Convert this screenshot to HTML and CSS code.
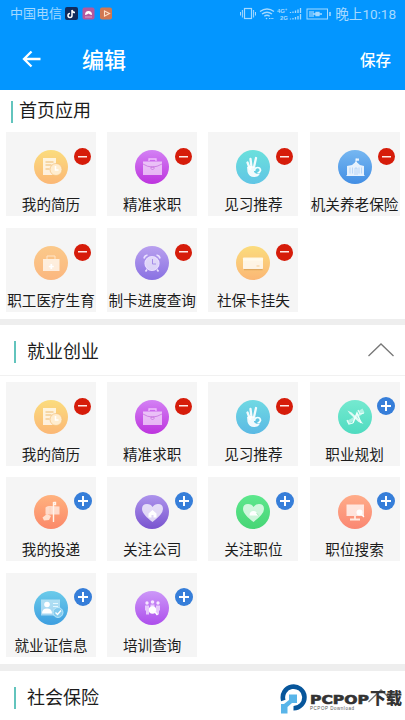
FILE: index.html
```html
<!DOCTYPE html>
<html lang="zh-CN">
<head>
<meta charset="utf-8">
<title>编辑</title>
<link rel="stylesheet" href="styles.css">
</head>
<body>
<svg class="defs" aria-hidden="true">
  <symbol id="resume" viewBox="0 0 34 34"><path d="M9 8h13v17H9z" fill="#fff" opacity=".75"/><path d="M11.500 12h8M11.500 15h6M11.500 19h4" stroke="#eebb70" stroke-width="1.2"/><circle cx="22" cy="19.500" r="6" fill="#ffedcf" stroke="#f3c27c" stroke-width=".7"/><path d="M21.500 16v4h3" fill="none" stroke="#fff" stroke-width="1.500"/></symbol>
  <symbol id="bag" viewBox="0 0 34 34"><path d="M14 11V9h7v2" fill="none" stroke="#efc1fb" stroke-width="1.300"/><path d="M8 11.500h19v13.500H8z" fill="#fff" opacity=".6"/><path d="M8 14q9 6 19 0M16 17h3v1.500L17.500 20 16 18.500z" fill="none" stroke="#c872de" stroke-width=".8"/></symbol>
  <symbol id="hand" viewBox="0 0 34 34"><g fill="none" stroke="#fff" stroke-width="2.300" stroke-linecap="round" opacity=".92"><path d="M14 19 11.500 12.500M15.500 17 14.500 9M18 17 20 8"/></g><path d="M11 17q3-1.500 6.500-.5l1 2.500q-1.500 2.500 .5 4 2.500 1.500 5 .5-1.500 3.500-6 3.500-5 0-6.500-5z" fill="#fff" opacity=".9"/><path d="M18.500 21q0-3.500 3-3.500t3 3q-.5 2-3 2.500" fill="none" stroke="#f2feff" stroke-width="1.700"/></symbol>
  <symbol id="building" viewBox="0 0 34 34"><path d="M18 13V8.500" stroke="#fff" stroke-width=".9"/><path d="M18 8.500h3v2.200h-3zM9 16l5-1 4-3.500 4 3.500 4 1v9.500H9z" fill="#fff" opacity=".85"/><path d="M12 17.500v6M14.500 17.500v6M21 17.500v6M23.500 17.500v6M17 25v-7h2v7" stroke="#a8ccf6" stroke-width=".7" fill="none"/><path d="M8.500 25.500h18" stroke="#e7f3ff"/></symbol>
  <symbol id="medkit" viewBox="0 0 34 34"><path d="M13 13v-3h8v3" fill="none" stroke="#ffe6c8" stroke-width="1"/><path d="M9 13h16.500v12H9z" fill="#fff" opacity=".72"/><path d="M17.300 18v5M14.800 20.500h5" stroke="#fff" stroke-width="1.700"/></symbol>
  <symbol id="clock" viewBox="0 0 34 34"><circle cx="17" cy="17.500" r="7" fill="#fff" fill-opacity=".65" stroke="#e8dcff" stroke-width="1.200"/><path d="M9 12.500q.5-3 3.500-3.500M21.500 9q3 .5 3.500 3.500M12 23.500l-1.500 2M22 23.500l1.500 2" stroke="#eae0ff" stroke-width="1.700" fill="none"/><path d="M17.500 13v5h3.500" fill="none" stroke="#a58ce9"/></symbol>
  <symbol id="card" viewBox="0 0 34 34"><path d="M8 23.500h18.500" stroke="#e0a95f" stroke-width="1.500"/><rect x="7" y="11.500" width="20" height="11.500" rx=".7" fill="#fff" opacity=".8"/><path d="M7 13.500h20" stroke="#fffbed" stroke-width="2"/><path d="M20.500 20h3" stroke="#f5cf9a"/></symbol>
  <symbol id="plan" viewBox="0 0 34 34"><path d="m8.500 21 4-2 9-6-1-2 4-2.500 2 4-16 12z" fill="#fff" opacity=".5"/><path d="m9 20 2 4 4-1M20 10l2 4 4-1" fill="none" stroke="#e7fffa" stroke-width="1.200"/><path d="m9.500 10.500 4 2 9 8 3 3.500-5-2-9-8.500z" fill="#fff" opacity=".8"/><path d="m15 23 4-10 4 10" fill="none" stroke="#f3fffc" stroke-width="1.400"/></symbol>
  <symbol id="mail" viewBox="0 0 34 34"><path d="M11.500 12.500q1.500-2 4.500-1.500l9.500.5v8h-14z" fill="#fff" opacity=".62"/><path d="M19.500 27V7M19.500 7.500h2v2h-2" stroke="#fff3e9" stroke-width="1.400" fill="none"/><path d="m8.500 22.500 4.500-3.500 4 2-2 4-5 .5z" fill="#ffe0cf"/><path d="M16 11.500v8" stroke="#ffd0b8" stroke-width=".8"/></symbol>
  <symbol id="heart" viewBox="0 0 34 34"><path d="M17.500 27C12 23 7 18 7 14q0-5 5-5 4 0 5.500 3 2-3 5.500-3 5 0 5 5 0 5-10.500 13z" fill="#fff" opacity=".73"/></symbol>
  <symbol id="heart-home" viewBox="0 0 34 34"><use href="#heart"/><path d="m13.500 18.500 4-3.500 4 3.500v4h-3v-2.500h-2v2.500h-3z" fill="#fff"/></symbol>
  <symbol id="heart-user" viewBox="0 0 34 34"><use href="#heart"/><path d="M13.500 20.500q0-4.500 4-4.500 3 0 3.500 2.500l1 2z" fill="#fff"/><path d="m20.500 18 2 2.500" stroke="#a0e9b4" stroke-width=".8"/></symbol>
  <symbol id="monitor" viewBox="0 0 34 34"><path d="M8.500 9.500H26V21H8.500z" fill="#fff" opacity=".74"/><path d="M17 21v3M12 24.500h10" stroke="#ffe9e0" stroke-width="1.800"/><circle cx="21.500" cy="17.500" r="3" fill="#fff"/><path d="m23.500 19.500 2.500 2.500" stroke="#fff" stroke-width="1.300"/></symbol>
  <symbol id="idcard" viewBox="0 0 34 34"><path d="M7 8.500h19v16H7z" fill="#fff" opacity=".5"/><circle cx="13" cy="13.500" r="2.800" fill="#fff"/><path d="M8 22.500q0-5 5-5t5 5z" fill="#fff"/><path d="M19 12.500h5M19 15.500h5" stroke="#e5f8ff"/><circle cx="24" cy="21.500" r="5" fill="#84cbee" stroke="#c9effc" stroke-width=".8"/><path d="m21.500 21.500 2 2 3.500-4" fill="none" stroke="#fff" stroke-width="1.300"/></symbol>
  <symbol id="people" viewBox="0 0 34 34"><g fill="#f6e7ff"><circle cx="12" cy="12" r="1.700"/><circle cx="17.500" cy="11" r="1.800"/><circle cx="23" cy="12" r="1.700"/><path d="M10 14.500h4v9h-3v-4h-1zM15.500 13.500h4v5h-4zM21 14.500h4v5h-1v4h-3z" opacity=".75"/><circle cx="17.500" cy="19" r="3.700" fill="#fff"/></g><path d="m20 21 2.500 3" stroke="#fff" stroke-width="1.500"/></symbol>
</svg>

<header class="top">
  <div class="status">
    <span class="carrier">中国电信</span>
    <svg class="apps" width="47" height="14" viewBox="0 0 47 14"><rect x="0" y="0" width="13" height="13" rx="2" fill="#112b5c"/><path d="M7 3v5.500A2 2 0 1 1 5 6.500M7 3q.5 2.500 3 2.500" fill="none" stroke="#fff" stroke-width="1.500"/><rect x="17.500" y=".5" width="12" height="12" rx="2" fill="#b5589d"/><path d="M20 8q0-4 3.500-4T27 8l-2-.5-1.500-1L22 7.500z" fill="#fff"/><path d="M20 10h7" stroke="#dfa2c7"/><rect x="35" y=".5" width="12" height="12" rx="2" fill="#d17751"/><path d="m39.500 4 5 2.500-5 2.700z" fill="none" stroke="#ffe2cb" stroke-width="1.100"/></svg>
    <svg class="signals" width="91" height="14" viewBox="0 0 91 14" fill="none" stroke="#a5d9ff"><rect x="4.500" y="1.500" width="7" height="10" stroke-width="1.200"/><path d="M2.400 3v7.500M.5 5v3.500M13.600 3v7.500M15.500 5v3.500"/><path d="M20 4.500q7-5 14 0M22 7q5-3.600 10 0M24.300 9.300q2.700-2 5.400 0" stroke-width="1.400"/><circle cx="26.500" cy="11.500" r=".8" fill="#a5d9ff" stroke="none"/><path d="M29 11.500h5" stroke-dasharray="1.500 .8"/><path d="M50.500 6V5M53 6V4.500M55.500 6V3.500M58 6V2.500M60.500 6V1M50.500 12.500v-1M53 12.500V11M55.500 12.500V10M58 12.500V9M60.500 12.500V7" stroke-width="1.300"/><rect x="67" y="2" width="20.500" height="10"/><path d="M90 5v4" stroke-width="1.600"/><path d="M69 4h5v6h-5z" fill="#62bdff" stroke="none"/><path d="M73 7h9M76 5.500h3v3h-3z" stroke-width="1.300"/><g fill="#a5d9ff" stroke="none" class="net"><text x="37" y="6">4G⁺</text><text x="40" y="13">2G</text></g></svg>
    <span class="time">晚上10:18</span>
  </div>
  <div class="nav">
    <svg class="back" width="20" height="18" viewBox="0 0 20 18"><path d="M18.500 9H2M9.500 1.500 2 9l7.500 7.500" fill="none" stroke="#fff" stroke-width="2.300"/></svg>
    <h1>编辑</h1>
    <span class="save">保存</span>
  </div>
</header>

<main>
  <section class="home">
    <h2 class="compact">首页应用</h2>
    <div class="grid">
      <div class="tile"><svg class="icon gold"><use href="#resume"/></svg><i class="badge minus"></i><span>我的简历</span></div>
      <div class="tile"><svg class="icon magenta"><use href="#bag"/></svg><i class="badge minus"></i><span>精准求职</span></div>
      <div class="tile"><svg class="icon cyan"><use href="#hand"/></svg><i class="badge minus"></i><span>见习推荐</span></div>
      <div class="tile"><svg class="icon blue"><use href="#building"/></svg><i class="badge minus"></i><span>机关养老保险</span></div>
      <div class="tile"><svg class="icon peach"><use href="#medkit"/></svg><i class="badge minus"></i><span>职工医疗生育</span></div>
      <div class="tile"><svg class="icon violet"><use href="#clock"/></svg><i class="badge minus"></i><span>制卡进度查询</span></div>
      <div class="tile"><svg class="icon gold"><use href="#card"/></svg><i class="badge minus"></i><span>社保卡挂失</span></div>
    </div>
  </section>
  <section class="jobs">
    <h2>就业创业<svg class="chevron" width="26" height="14" viewBox="0 0 26 14"><path d="M.5 13 13 1l12.500 12" fill="none" stroke="#777" stroke-width="1.300"/></svg></h2>
    <div class="grid">
      <div class="tile"><svg class="icon gold"><use href="#resume"/></svg><i class="badge minus"></i><span>我的简历</span></div>
      <div class="tile"><svg class="icon magenta"><use href="#bag"/></svg><i class="badge minus"></i><span>精准求职</span></div>
      <div class="tile"><svg class="icon sky"><use href="#hand"/></svg><i class="badge minus"></i><span>见习推荐</span></div>
      <div class="tile"><svg class="icon mint"><use href="#plan"/></svg><i class="badge plus"></i><span>职业规划</span></div>
      <div class="tile"><svg class="icon orange"><use href="#mail"/></svg><i class="badge plus"></i><span>我的投递</span></div>
      <div class="tile"><svg class="icon purple"><use href="#heart-home"/></svg><i class="badge plus"></i><span>关注公司</span></div>
      <div class="tile"><svg class="icon green"><use href="#heart-user"/></svg><i class="badge plus"></i><span>关注职位</span></div>
      <div class="tile"><svg class="icon salmon"><use href="#monitor"/></svg><i class="badge plus"></i><span>职位搜索</span></div>
      <div class="tile"><svg class="icon azure"><use href="#idcard"/></svg><i class="badge plus"></i><span>就业证信息</span></div>
      <div class="tile"><svg class="icon orchid"><use href="#people"/></svg><i class="badge plus"></i><span>培训查询</span></div>
    </div>
  </section>
  <section>
    <h2>社会保险<svg class="chevron" width="26" height="14" viewBox="0 0 26 14"><path d="M.5 13 13 1l12.500 12" fill="none" stroke="#777" stroke-width="1.300"/></svg></h2>
  </section>
</main>
<svg class="watermark" width="125" height="34" viewBox="0 0 125 34">
  <path d="M3.300 18.500A10.800 10.800 0 1 1 13.500 26.200" fill="none" stroke="#07569b" stroke-width="4.600"/>
  <path d="M1 22h3l5-4v-5.500h8V21h-5l-4.500 4v6.500H1z" fill="#59b5e9"/>
  <text class="brand" x="30" y="21.500" textLength="59" lengthAdjust="spacingAndGlyphs">PCPOP</text>
  <text class="brand-cn" x="90" y="22" textLength="32" lengthAdjust="spacingAndGlyphs">下载</text>
  <text class="brand-sub" x="30" y="27.500" textLength="44">PCPOP Download</text>
</svg>
</body>
</html>
```
FILE: styles.css
```css
* { box-sizing: border-box; }
body {
  margin: 0;
  width: 405px;
  height: 720px;
  overflow: hidden;
  background: #fff;
  color: #1c1c1c;
  font-family: Roboto, "Noto Sans CJK SC", sans-serif;
}
.defs { display: none; }
.top { height: 90px; background: #0396ff; color: #fff; }
.status {
  display: flex;
  align-items: center;
  height: 28px;
  padding: 0 9px 0 10px;
  color: #a5d9ff;
  font-size: 13px;
  line-height: 28px;
}
.apps { margin-left: 3px; }
.signals { margin-left: auto; margin-right: 4px; }
.net { font: bold 6px "Liberation Sans", sans-serif; }
.time { font-size: 13.600px; letter-spacing: -.05px; }
.nav { display: flex; align-items: center; height: 62px; padding: 0 14px 0 22px; }
.nav h1 { margin: 3px 0 0 40px; font-size: 22px; font-weight: 500; line-height: 62px; }
.save { margin-left: auto; font-size: 15.500px; font-weight: 500; }
h2 {
  display: flex;
  align-items: center;
  height: 51px;
  margin: 0 0 6px;
  padding: 0 11px 0 14px;
  border-bottom: 1px solid #f1f1f1;
  font-size: 18px;
  font-weight: 400;
}
h2::before { content: ""; width: 2px; height: 22px; margin: 4px 11px 0 0; background: #62c4bd; }
h2.compact { height: 42px; margin: 0; padding: 0 0 1px 11px; border: 0; line-height: 42px; }
h2.compact::before { margin: 2px 6px 0 0; }
.chevron { margin-left: auto; }
.home { height: 234.500px; border-bottom: 6.500px solid #eee; }
.jobs { height: 346px; border-bottom: 7px solid #eee; }
.grid {
  display: grid;
  grid-template-columns: repeat(4, 90px);
  grid-auto-rows: 84px;
  gap: 11.600px 11.200px;
  padding-left: 6px;
}
.tile {
  position: relative;
  display: flex;
  flex-direction: column;
  align-items: center;
  padding-top: 18px;
  background: #f5f5f5;
  font-size: 14.600px;
  line-height: 20px;
  white-space: nowrap;
}
.tile span { margin-top: 11px; }
.icon { width: 34px; height: 34px; border-radius: 50%; flex: none; }
.badge {
  position: absolute;
  top: 16px;
  right: 5px;
  width: 17px;
  height: 17px;
  border-radius: 50%;
  background: linear-gradient(#ffe9e6, #ffe9e6) center / 9px 1.500px no-repeat #d61c0a;
}
.badge.plus {
  top: 15px;
  right: 4.500px;
  width: 18px;
  height: 18px;
  background: linear-gradient(#fff, #fff) center / 10px 2px no-repeat, linear-gradient(#fff, #fff) center / 2px 10px no-repeat #367ed9;
}
.gold { background: linear-gradient(#fbdc7d, #fbb775); }
.magenta { background: linear-gradient(#d381f4, #bd34de); }
.cyan { background: linear-gradient(#6be0dc, #60c5e5); }
.sky { background: linear-gradient(#70d9e3, #5ab9e4); }
.blue { background: linear-gradient(#76b7f1, #428ee4); }
.peach { background: linear-gradient(#fbc98a, #fbb77f); }
.violet { background: linear-gradient(#b9a0ef, #8971e2); }
.mint { background: linear-gradient(#75e9d0, #4fdbc0); }
.orange { background: linear-gradient(#ffb27e, #fb8869); }
.purple { background: linear-gradient(#ad93ec, #7954cf); }
.green { background: linear-gradient(#5de78d, #47d575); }
.salmon { background: linear-gradient(#ffac89, #fa8772); }
.azure { background: linear-gradient(#6bcbea, #3d9ee0); }
.orchid { background: linear-gradient(#cc98f8, #ad4eec); }
.watermark { position: absolute; left: 280px; top: 682px; }
.brand { font: bold 12.500px "DejaVu Sans", sans-serif; fill: #333; stroke: #333; stroke-width: .6; }
.brand-cn { font: 900 16px "Noto Sans CJK SC", sans-serif; fill: #333; }
.brand-sub { font: 4.500px "Liberation Sans", sans-serif; fill: #555; }
```
